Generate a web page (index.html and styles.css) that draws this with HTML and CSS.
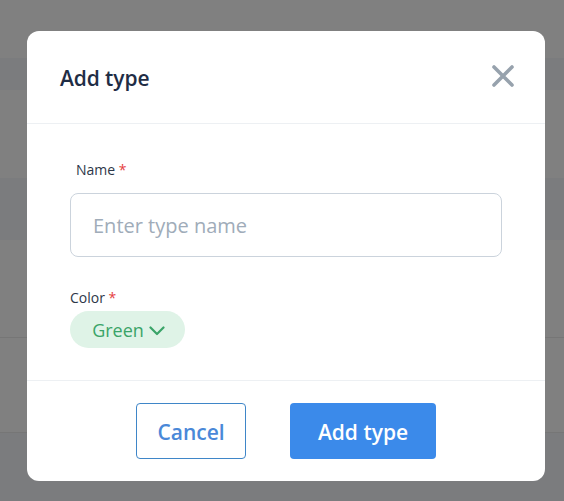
FILE: index.html
```html
<!DOCTYPE html>
<html>
<head>
<meta charset="utf-8">
<link rel="stylesheet" href="styles.css">
</head>
<body>
<div class="bg">
  <div class="band b1"></div>
  <div class="band b2 alt"></div>
  <div class="band b3"></div>
  <div class="band b4 alt"></div>
  <div class="band b5 line"></div>
  <div class="band b6 line"></div>
  <div class="band b7 alt"></div>
</div>
<div class="overlay">
  <div class="modal">
    <div class="header">
      <h2 class="title">Add type</h2>
      <button class="close" aria-label="Close">
        <svg width="22" height="22" viewBox="0 0 22 22"><path d="M2 2 L20 20 M20 2 L2 20" stroke="#97a2ad" stroke-width="3.6" stroke-linecap="round"/></svg>
      </button>
    </div>
    <div class="body">
      <label class="label name-label">Name <span class="req">*</span></label>
      <input class="input" type="text" placeholder="Enter type name">
      <label class="label color-label">Color <span class="req">*</span></label>
      <button class="pill">Green
        <svg width="16" height="10" viewBox="0 0 16 10"><path d="M1.5 1.5 L8 8 L14.5 1.5" stroke="#3aa468" stroke-width="2.2" fill="none" stroke-linecap="round" stroke-linejoin="round"/></svg>
      </button>
    </div>
    <div class="footer">
      <button class="btn cancel">Cancel</button>
      <button class="btn primary">Add type</button>
    </div>
  </div>
</div>
</body>
</html>
```
FILE: styles.css
```css
html, body {
  margin: 0;
  padding: 0;
}
body {
  width: 564px;
  height: 501px;
  overflow: hidden;
  position: relative;
  font-family: "Open Sans", "Noto Sans", sans-serif;
  background: #808080;
}
.bg {
  display: flex;
  flex-direction: column;
}
.band { background: #808080; }
.band.alt { background: #7b7c7e; }
.band.line { border-bottom: 1px solid #767676; }
.b1 { height: 58px; }
.b2 { height: 32px; }
.b3 { height: 88px; }
.b4 { height: 62px; }
.b5 { height: 97px; }
.b6 { height: 94px; }
.b7 { height: 68px; }

.overlay {
  position: absolute;
  inset: 0;
  padding: 31px 0 0 27px;
}
.modal {
  width: 518px;
  height: 450px;
  background: #fff;
  border-radius: 12px;
  display: flex;
  flex-direction: column;
  overflow: hidden;
}
.header {
  height: 93px;
  box-sizing: border-box;
  border-bottom: 1px solid #edf0f3;
  display: flex;
  align-items: center;
  justify-content: space-between;
  padding: 0 31px 0 33px;
}
.title {
  margin: 0;
  font-size: 21px;
  font-weight: 600;
  color: #1f2d45;
  letter-spacing: -0.1px;
  padding-top: 2px;
}
.close {
  border: none;
  background: none;
  padding: 0;
  width: 22px;
  height: 22px;
  display: flex;
  margin-bottom: 2px;
}
.body {
  height: 257px;
  box-sizing: border-box;
  border-bottom: 1px solid #edf0f3;
  padding: 36px 43px 0 43px;
  display: flex;
  flex-direction: column;
  align-items: flex-start;
}
.label {
  font-size: 14px;
  color: #2d3748;
  line-height: 20px;
}
.name-label { margin-left: 6px; }
.req { color: #e53e3e; }
.input {
  margin-top: 13px;
  width: 432px;
  height: 64px;
  box-sizing: border-box;
  border: 1px solid #cbd3dc;
  border-radius: 8px;
  padding: 0 22px;
  font-family: inherit;
  font-size: 20px;
  color: #2d3748;
  outline: none;
}
.input::placeholder { color: #a0acb9; }
.color-label { margin-top: 31px; }
.pill {
  margin-top: 3px;
  height: 37px;
  width: 115px;
  border: none;
  border-radius: 19px;
  background: #dff3e7;
  color: #3aa468;
  font-family: inherit;
  font-size: 18px;
  display: flex;
  align-items: center;
  justify-content: center;
  gap: 5px;
  padding: 0 0 0 2px;
}
.pill svg { margin-top: 2px; }
.footer {
  flex: 1;
  display: flex;
  align-items: flex-start;
  justify-content: center;
  gap: 44px;
  padding-top: 22px;
}
.btn {
  height: 56px;
  border-radius: 4px;
  font-family: inherit;
  font-size: 21px;
  font-weight: 600;
  padding: 2px 0 0 0;
}
.cancel {
  width: 110px;
  background: #fff;
  border: 1px solid #3f86c8;
  color: #4a88d8;
}
.primary {
  width: 146px;
  background: #3b8aea;
  border: none;
  color: #fff;
}
```
